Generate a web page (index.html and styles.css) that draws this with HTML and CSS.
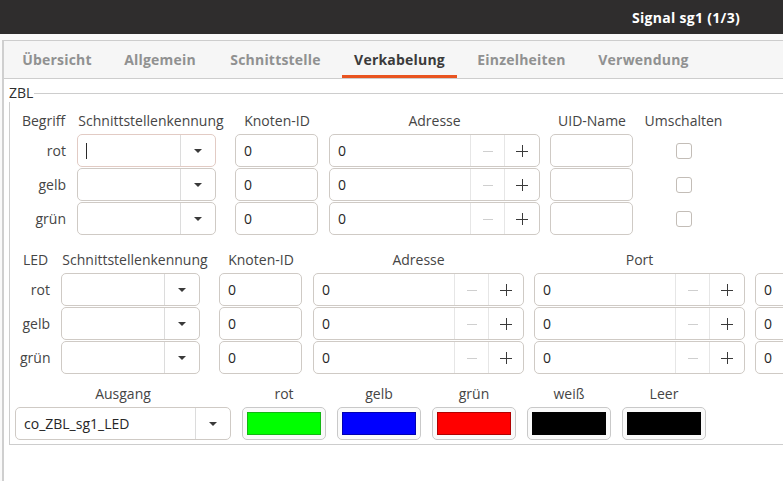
FILE: index.html
```html
<!DOCTYPE html>
<html lang="de">
<head>
<meta charset="utf-8">
<title>Signal sg1 (1/3)</title>
<link rel="stylesheet" href="styles.css">
</head>
<body>
<div class="window">
  <header class="titlebar"><span class="title">Signal sg1 (1/3)</span></header>
  <div class="strip"></div>
  <div class="notebook">
    <nav class="tabs">
      <span class="tab t1">Übersicht</span>
      <span class="tab t2">Allgemein</span>
      <span class="tab t3">Schnittstelle</span>
      <span class="tab t4 active">Verkabelung</span>
      <span class="tab t5">Einzelheiten</span>
      <span class="tab t6">Verwendung</span>
    </nav>
    <div class="page">
      <div class="frame">
        <div class="frame-head"><span class="frame-label">ZBL</span><span class="frame-line"></span></div>
        <div class="frame-body">

          <div class="grid zbl">
            <span class="hdr">Begriff</span>
            <span class="hdr">Schnittstellenkennung</span>
            <span class="hdr">Knoten-ID</span>
            <span class="hdr">Adresse</span>
            <span class="hdr">UID-Name</span>
            <span class="hdr">Umschalten</span>

            <span class="rowlbl">rot</span>
            <div class="combo focus"><span class="combo-text"><span class="cursor"></span></span><span class="combo-btn"><span class="arrow"></span></span></div>
            <div class="entry">0</div>
            <div class="spin"><span class="spin-text">0</span><span class="spin-btn minus"><svg width="12" height="12" viewBox="0 0 12 12"><path d="M1 6.5h10" stroke="#cfcfcf" stroke-width="1"/></svg></span><span class="spin-btn plus"><svg width="14" height="14" viewBox="0 0 14 14"><path d="M1 7.5h12M7.5 1v12" stroke="#3a3a3a" stroke-width="1"/></svg></span></div>
            <div class="entry"></div>
            <span class="check"></span>

            <span class="rowlbl">gelb</span>
            <div class="combo"><span class="combo-text"></span><span class="combo-btn"><span class="arrow"></span></span></div>
            <div class="entry">0</div>
            <div class="spin"><span class="spin-text">0</span><span class="spin-btn minus"><svg width="12" height="12" viewBox="0 0 12 12"><path d="M1 6.5h10" stroke="#cfcfcf" stroke-width="1"/></svg></span><span class="spin-btn plus"><svg width="14" height="14" viewBox="0 0 14 14"><path d="M1 7.5h12M7.5 1v12" stroke="#3a3a3a" stroke-width="1"/></svg></span></div>
            <div class="entry"></div>
            <span class="check"></span>

            <span class="rowlbl">grün</span>
            <div class="combo"><span class="combo-text"></span><span class="combo-btn"><span class="arrow"></span></span></div>
            <div class="entry">0</div>
            <div class="spin"><span class="spin-text">0</span><span class="spin-btn minus"><svg width="12" height="12" viewBox="0 0 12 12"><path d="M1 6.5h10" stroke="#cfcfcf" stroke-width="1"/></svg></span><span class="spin-btn plus"><svg width="14" height="14" viewBox="0 0 14 14"><path d="M1 7.5h12M7.5 1v12" stroke="#3a3a3a" stroke-width="1"/></svg></span></div>
            <div class="entry"></div>
            <span class="check"></span>
          </div>

          <div class="grid led">
            <span class="hdr">LED</span>
            <span class="hdr">Schnittstellenkennung</span>
            <span class="hdr">Knoten-ID</span>
            <span class="hdr">Adresse</span>
            <span class="hdr">Port</span>
            <span class="hdr"></span>

            <span class="rowlbl">rot</span>
            <div class="combo"><span class="combo-text"></span><span class="combo-btn"><span class="arrow"></span></span></div>
            <div class="entry">0</div>
            <div class="spin"><span class="spin-text">0</span><span class="spin-btn minus"><svg width="12" height="12" viewBox="0 0 12 12"><path d="M1 6.5h10" stroke="#cfcfcf" stroke-width="1"/></svg></span><span class="spin-btn plus"><svg width="14" height="14" viewBox="0 0 14 14"><path d="M1 7.5h12M7.5 1v12" stroke="#3a3a3a" stroke-width="1"/></svg></span></div>
            <div class="spin"><span class="spin-text">0</span><span class="spin-btn minus"><svg width="12" height="12" viewBox="0 0 12 12"><path d="M1 6.5h10" stroke="#cfcfcf" stroke-width="1"/></svg></span><span class="spin-btn plus"><svg width="14" height="14" viewBox="0 0 14 14"><path d="M1 7.5h12M7.5 1v12" stroke="#3a3a3a" stroke-width="1"/></svg></span></div>
            <div class="entry">0</div>

            <span class="rowlbl">gelb</span>
            <div class="combo"><span class="combo-text"></span><span class="combo-btn"><span class="arrow"></span></span></div>
            <div class="entry">0</div>
            <div class="spin"><span class="spin-text">0</span><span class="spin-btn minus"><svg width="12" height="12" viewBox="0 0 12 12"><path d="M1 6.5h10" stroke="#cfcfcf" stroke-width="1"/></svg></span><span class="spin-btn plus"><svg width="14" height="14" viewBox="0 0 14 14"><path d="M1 7.5h12M7.5 1v12" stroke="#3a3a3a" stroke-width="1"/></svg></span></div>
            <div class="spin"><span class="spin-text">0</span><span class="spin-btn minus"><svg width="12" height="12" viewBox="0 0 12 12"><path d="M1 6.5h10" stroke="#cfcfcf" stroke-width="1"/></svg></span><span class="spin-btn plus"><svg width="14" height="14" viewBox="0 0 14 14"><path d="M1 7.5h12M7.5 1v12" stroke="#3a3a3a" stroke-width="1"/></svg></span></div>
            <div class="entry">0</div>

            <span class="rowlbl">grün</span>
            <div class="combo"><span class="combo-text"></span><span class="combo-btn"><span class="arrow"></span></span></div>
            <div class="entry">0</div>
            <div class="spin"><span class="spin-text">0</span><span class="spin-btn minus"><svg width="12" height="12" viewBox="0 0 12 12"><path d="M1 6.5h10" stroke="#cfcfcf" stroke-width="1"/></svg></span><span class="spin-btn plus"><svg width="14" height="14" viewBox="0 0 14 14"><path d="M1 7.5h12M7.5 1v12" stroke="#3a3a3a" stroke-width="1"/></svg></span></div>
            <div class="spin"><span class="spin-text">0</span><span class="spin-btn minus"><svg width="12" height="12" viewBox="0 0 12 12"><path d="M1 6.5h10" stroke="#cfcfcf" stroke-width="1"/></svg></span><span class="spin-btn plus"><svg width="14" height="14" viewBox="0 0 14 14"><path d="M1 7.5h12M7.5 1v12" stroke="#3a3a3a" stroke-width="1"/></svg></span></div>
            <div class="entry">0</div>
          </div>

          <div class="grid out">
            <span class="hdr">Ausgang</span>
            <span class="hdr">rot</span>
            <span class="hdr">gelb</span>
            <span class="hdr">grün</span>
            <span class="hdr">weiß</span>
            <span class="hdr">Leer</span>

            <div class="combo wide"><span class="combo-text">co_ZBL_sg1_LED</span><span class="combo-btn"><span class="arrow"></span></span></div>
            <div class="colorbtn"><span class="swatch green"></span></div>
            <div class="colorbtn"><span class="swatch blue"></span></div>
            <div class="colorbtn"><span class="swatch red"></span></div>
            <div class="colorbtn"><span class="swatch black"></span></div>
            <div class="colorbtn"><span class="swatch black"></span></div>
          </div>

        </div>
      </div>
    </div>
  </div>
</div>
</body>
</html>
```

FILE: styles.css
```css
* { box-sizing: border-box; }

html, body {
  margin: 0;
  padding: 0;
  width: 783px;
  height: 481px;
  overflow: hidden;
  background: #fafafa;
  font-family: "Open Sans", "Noto Sans", sans-serif;
  font-size: 14px;
  color: #3d3d3d;
}

.window {
  width: 783px;
  height: 481px;
  display: flex;
  flex-direction: column;
  overflow: hidden;
}

.titlebar {
  height: 34px;
  flex: none;
  background: #2f2d2d;
  display: flex;
  align-items: center;
  justify-content: flex-end;
  padding-right: 43px;
}

.title {
  color: #ffffff;
  font-weight: 700;
  font-size: 14px;
  letter-spacing: 0.3px;
}

.strip {
  height: 6px;
  flex: none;
  background: #fafafa;
}

.notebook {
  flex: 1;
  margin-left: 2px;
  border-left: 2px solid #cfcfcf;
  border-top: 1px solid #cdcdcd;
  display: flex;
  flex-direction: column;
  background: #ffffff;
  overflow: hidden;
}

.tabs {
  height: 38px;
  flex: none;
  background: #f6f6f6;
  border-bottom: 1px solid #cdcdcd;
  display: flex;
  padding-left: 3px;
}

.tab {
  line-height: 37px;
  font-weight: 700;
  text-align: center;
  white-space: nowrap;
  color: #909191;
  letter-spacing: 0.2px;
}

.t1 { width: 100px; }
.t2 { width: 106px; }
.t3 { width: 125px; }
.t4 { width: 123px; }
.t5 { width: 121px; }
.t6 { width: 123px; }

.tab.active {
  color: #3b3b3b;
  background: linear-gradient(#e95420, #e95420) no-repeat center bottom;
  background-size: calc(100% - 8px) 3px;
}

.page {
  flex: 1;
  padding: 5px 0 0 5px;
  background: #ffffff;
  overflow: hidden;
}

.frame {
  width: 900px;
}

.frame-head {
  height: 18px;
  display: flex;
  align-items: center;
}

.frame-label {
  color: #2e2e2e;
  line-height: 18px;
}

.frame-line {
  flex: 1;
  height: 1px;
  background: #cdcdcd;
  margin-left: 1px;
}

.frame-body {
  border-left: 1px solid #cdcdcd;
  border-bottom: 1px solid #cdcdcd;
  padding: 9px 0 4px 10px;
}

.grid {
  display: grid;
  column-gap: 10px;
  row-gap: 1px;
  grid-template-rows: 22px repeat(3, 33px);
  align-items: stretch;
}

.zbl {
  grid-template-columns: 47px 148px 84px 211px 84px 79px;
}

.led {
  margin-top: 15px;
  grid-template-columns: 31px 148px 84px 211px 211px 84px;
}

.out {
  margin-top: 10px;
  margin-left: -5px;
  column-gap: 11px;
  grid-template-rows: 22px 33px;
  grid-template-columns: 216px repeat(5, 84px);
}

.hdr {
  line-height: 20px;
  text-align: center;
  white-space: nowrap;
  color: #454545;
  align-self: start;
}

.rowlbl {
  align-self: center;
  text-align: right;
  padding-right: 1px;
  color: #454545;
}

.entry,
.combo,
.spin {
  height: 33px;
  border: 1px solid #cfcac5;
  border-radius: 5px;
  background: #ffffff;
  color: #262626;
}

.entry {
  width: 83px;
  padding-left: 8px;
  display: flex;
  align-items: center;
}

.combo {
  width: 139px;
  display: flex;
}

.combo.wide {
  width: 216px;
}

.combo.focus {
  border-color: #e2cbc4;
}

.combo-text {
  flex: 1;
  display: flex;
  align-items: center;
  padding-left: 8px;
}

.cursor {
  width: 1px;
  height: 16px;
  background: #2a2a2a;
}

.combo-btn {
  width: 35px;
  border-left: 1px solid #dcdcdc;
  display: flex;
  align-items: center;
  justify-content: center;
}

.arrow {
  width: 0;
  height: 0;
  border-left: 4.5px solid transparent;
  border-right: 4.5px solid transparent;
  border-top: 4.5px solid #3a3a3a;
  margin-top: 1px;
}

.spin {
  width: 211px;
  display: flex;
}

.spin-text {
  flex: 1;
  display: flex;
  align-items: center;
  padding-left: 8px;
}

.spin-btn {
  border-left: 1px solid #e6e6e6;
  display: flex;
  align-items: center;
  justify-content: center;
}

.spin-btn.minus { width: 34px; }
.spin-btn.plus { width: 35px; }

.check {
  justify-self: center;
  align-self: center;
  width: 16px;
  height: 16px;
  border: 1px solid #c3bdb7;
  border-radius: 3px;
  background: #ffffff;
}

.colorbtn {
  height: 33px;
  border: 1px solid #c9c9c9;
  border-radius: 5px;
  background: #fafafa;
  padding: 4px;
  display: flex;
}

.swatch {
  flex: 1;
  border: 1px solid #000000;
}

.swatch.green { background: #00ff00; border-color: #13b613; }
.swatch.blue { background: #0000ff; border-color: #0000b0; }
.swatch.red { background: #ff0000; border-color: #b00000; }
.swatch.black { background: #000000; border-color: #000000; }
```
